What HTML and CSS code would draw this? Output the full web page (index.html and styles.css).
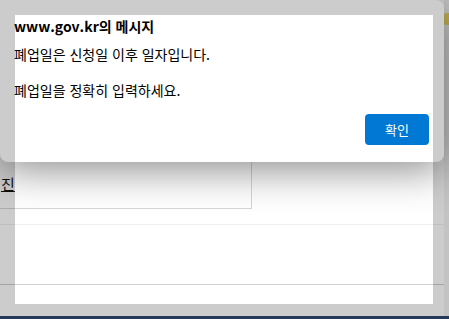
FILE: index.html
```html
<!DOCTYPE html>
<html lang="ko">

<head>
  <meta charset="utf-8">
  <title>www.gov.kr</title>
  <link rel="stylesheet" href="styles.css">
</head>

<body>
  <div class="page">
    <div class="side">
      <span class="side-tag"></span>
    </div>
    <div class="content">
      <div class="info-box">
        <a class="info-link" href="#">진</a>
      </div>
      <div class="rule rule-light"></div>
      <div class="rule rule-dark"></div>
    </div>
    <div class="footer-bar"></div>
  </div>

  <div class="frame"></div>

  <div class="dialog">
    <div class="dialog-title">www.gov.kr의 메시지</div>
    <div class="dialog-msg">폐업일은 신청일 이후 일자입니다.

폐업일을 정확히 입력하세요.</div>
    <div class="dialog-actions">
      <button class="btn-ok">확인</button>
    </div>
  </div>
</body>

</html>
```

FILE: styles.css
```css
html,
body {
  margin: 0;
  height: 100%;
  overflow: hidden;
}

body {
  position: relative;
  background: #fff;
  font-family: "Noto Sans CJK KR", "Noto Sans", sans-serif;
  color: #000;
}

.page {
  height: 319px;
  display: flex;
  flex-direction: column;
  position: relative;
}

.side {
  position: absolute;
  top: 0;
  right: 0;
  width: 5px;
  height: 316px;
  background: #f4f4f4;
}

.side-tag {
  display: block;
  margin-top: 13px;
  width: 5px;
  height: 12px;
  background: #f3d86a;
  border-radius: 2px 0 0 2px;
}

.content {
  flex: 1;
}

.info-box {
  margin-top: 140px;
  margin-left: -8px;
  width: 260px;
  height: 69px;
  border: 1px solid #d6d6d6;
  box-sizing: border-box;
  display: flex;
  align-items: flex-end;
  padding: 0 0 15px 0;
}

.info-link {
  font-size: 15px;
  line-height: 18px;
  color: #111;
  text-decoration: underline;
  margin-left: 8px;
}

.rule {
  height: 1px;
}

.rule-light {
  margin-top: 15px;
  background: #efefef;
}

.rule-dark {
  margin-top: 59px;
  background: #cfcfcf;
}

.footer-bar {
  height: 3px;
  background: #314872;
}

.frame {
  position: absolute;
  left: 15px;
  top: 15px;
  width: 418px;
  height: 289px;
  box-shadow: 0 0 0 400px rgba(0, 0, 0, 0.2);
  pointer-events: none;
  z-index: 1;
}

.dialog {
  position: absolute;
  left: 0;
  top: 0;
  width: 444px;
  height: 162px;
  box-sizing: border-box;
  padding: 16px 15px 17px 14px;
  background: #fff;
  border-radius: 0 8px 8px 8px;
  box-shadow: 0 8px 40px rgba(0, 0, 0, 0.45);
  display: flex;
  flex-direction: column;
}

.dialog-title {
  font-weight: bold;
  font-size: 14px;
  line-height: 20px;
}

.dialog-msg {
  margin-top: 9px;
  font-size: 14px;
  line-height: 18px;
  white-space: pre-line;
}

.dialog-actions {
  margin-top: 15px;
  display: flex;
  justify-content: flex-end;
}

.btn-ok {
  width: 64px;
  height: 31px;
  border: 0;
  border-radius: 4px;
  background: #0078d4;
  color: #fff;
  font-family: "Noto Sans CJK KR", sans-serif;
  font-size: 13px;
  cursor: pointer;
}
```
